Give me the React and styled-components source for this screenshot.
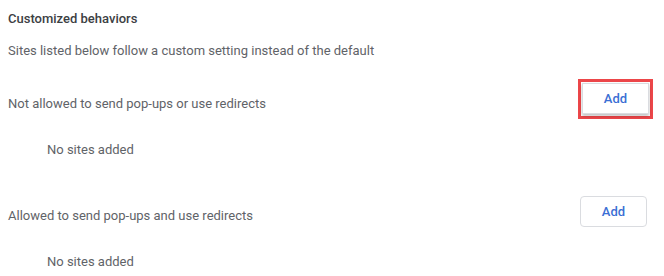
import React from "react";
import styled, { createGlobalStyle } from "styled-components";

const Global = createGlobalStyle`
  html, body { margin: 0; padding: 0; background: #fff; }
  body { font-family: Roboto, "Noto Sans", Arial, sans-serif; }
`;

const Page = styled.div`
  width: 664px;
  height: 276px;
  padding: 9px 17px 0 8px;
  box-sizing: border-box;
  display: flex;
  flex-direction: column;
`;

const Heading = styled.div`
  font-size: 13px;
  font-weight: 500;
  color: #3c4043;
  line-height: 20px;
`;

const Subtitle = styled.div`
  font-size: 13px;
  color: #5f6368;
  line-height: 20px;
  margin-top: 12px;
`;

const Row = styled.div`
  display: flex;
  align-items: flex-start;
  justify-content: space-between;
  margin-top: ${(p) => p.$top}px;
`;

const Label = styled.div`
  font-size: 13px;
  color: #5f6368;
  line-height: 20px;
  margin-top: ${(p) => p.$top}px;
`;

const Empty = styled.div`
  font-size: 13px;
  color: #5f6368;
  line-height: 20px;
  padding-left: 39px;
  margin-top: ${(p) => p.$top}px;
`;

const Highlight = styled.div`
  border: 3px solid #ec4649;
  padding: 1px 1px 2px 1px;
  margin-right: -6px;
  display: flex;
`;

const Button = styled.button`
  width: 67px;
  height: 31px;
  border: 1px solid #dadce0;
  background: #fff;
  color: #3b6fd4;
  font-family: Roboto, "Noto Sans", Arial, sans-serif;
  font-size: 13px;
  font-weight: 500;
  padding: 0;
  box-shadow: ${(p) => (p.$raised ? "0 2px 3px rgba(0,0,0,0.25)" : "none")};
  border-radius: ${(p) => (p.$raised ? "0" : "4px")};
`;

export default function App() {
  return (
    <>
      <Global />
      <Page>
        <Heading>Customized behaviors</Heading>
        <Subtitle>Sites listed below follow a custom setting instead of the default</Subtitle>
        <Row $top={18}>
          <Label $top={15}>Not allowed to send pop-ups or use redirects</Label>
          <Highlight>
            <Button $raised>Add</Button>
          </Highlight>
        </Row>
        <Empty $top={21}>No sites added</Empty>
        <Row $top={36}>
          <Label $top={10}>Allowed to send pop-ups and use redirects</Label>
          <Button>Add</Button>
        </Row>
        <Empty $top={25}>No sites added</Empty>
      </Page>
    </>
  );
}
